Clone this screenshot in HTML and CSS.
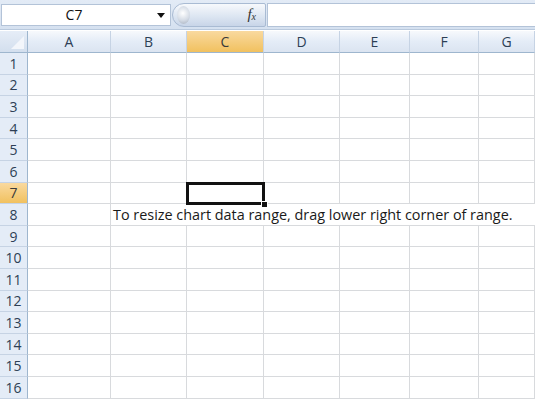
FILE: index.html
```html
<!DOCTYPE html>
<html lang="en">
<head>
    <meta charset="UTF-8">
    <title>Sheet1</title>
    <link rel="stylesheet" href="styles.css">
</head>
<body>

<div class="formula-bar">
    <div class="name-box">
        <span class="cell-ref">C7</span>
        <span class="drop"></span>
    </div>
    <div class="fx-pill">
        <span class="knob"></span>
        <span class="fx">f<sub>x</sub></span>
    </div>
    <div class="formula-input"></div>
</div>

<div class="sheet">
    <div class="corner"><span class="tri"></span></div>
    <div class="ch">A</div><div class="ch">B</div><div class="ch sel">C</div><div class="ch">D</div><div class="ch">E</div><div class="ch">F</div><div class="ch">G</div>

    <div class="rh">1</div><div class="c"></div><div class="c"></div><div class="c"></div><div class="c"></div><div class="c"></div><div class="c"></div><div class="c"></div>
    <div class="rh">2</div><div class="c"></div><div class="c"></div><div class="c"></div><div class="c"></div><div class="c"></div><div class="c"></div><div class="c"></div>
    <div class="rh">3</div><div class="c"></div><div class="c"></div><div class="c"></div><div class="c"></div><div class="c"></div><div class="c"></div><div class="c"></div>
    <div class="rh">4</div><div class="c"></div><div class="c"></div><div class="c"></div><div class="c"></div><div class="c"></div><div class="c"></div><div class="c"></div>
    <div class="rh">5</div><div class="c"></div><div class="c"></div><div class="c"></div><div class="c"></div><div class="c"></div><div class="c"></div><div class="c"></div>
    <div class="rh">6</div><div class="c"></div><div class="c"></div><div class="c"></div><div class="c"></div><div class="c"></div><div class="c"></div><div class="c"></div>
    <div class="rh sel">7</div><div class="c"></div><div class="c"></div><div class="c active"><span class="handle"></span></div><div class="c"></div><div class="c"></div><div class="c"></div><div class="c"></div>
    <div class="rh">8</div><div class="c"></div><div class="c note">To resize chart data range, drag lower right corner of range.</div>
    <div class="rh">9</div><div class="c"></div><div class="c"></div><div class="c"></div><div class="c"></div><div class="c"></div><div class="c"></div><div class="c"></div>
    <div class="rh">10</div><div class="c"></div><div class="c"></div><div class="c"></div><div class="c"></div><div class="c"></div><div class="c"></div><div class="c"></div>
    <div class="rh">11</div><div class="c"></div><div class="c"></div><div class="c"></div><div class="c"></div><div class="c"></div><div class="c"></div><div class="c"></div>
    <div class="rh">12</div><div class="c"></div><div class="c"></div><div class="c"></div><div class="c"></div><div class="c"></div><div class="c"></div><div class="c"></div>
    <div class="rh">13</div><div class="c"></div><div class="c"></div><div class="c"></div><div class="c"></div><div class="c"></div><div class="c"></div><div class="c"></div>
    <div class="rh">14</div><div class="c"></div><div class="c"></div><div class="c"></div><div class="c"></div><div class="c"></div><div class="c"></div><div class="c"></div>
    <div class="rh">15</div><div class="c"></div><div class="c"></div><div class="c"></div><div class="c"></div><div class="c"></div><div class="c"></div><div class="c"></div>
    <div class="rh">16</div><div class="c"></div><div class="c"></div><div class="c"></div><div class="c"></div><div class="c"></div><div class="c"></div><div class="c"></div>
</div>

</body>
</html>
```

FILE: styles.css
```css
body {
    margin: 0;
    padding: 0;
    width: 535px;
    height: 400px;
    overflow: hidden;
    background: white;
    font-family: "Open Sans", "Liberation Sans", sans-serif;
}

/* formula bar */
.formula-bar {
    display: flex;
    align-items: center;
    height: 30px;
    padding: 0 0 0 1px;
    background: linear-gradient(#e3ebf6, #d5e1f0);
    border-bottom: 1px solid #b9c9dd;
    box-sizing: border-box;
}
.name-box {
    position: relative;
    width: 170px;
    height: 22px;
    background: white;
    border: 1px solid #b3c3d8;
    box-sizing: border-box;
    display: flex;
    align-items: center;
    justify-content: center;
}
.name-box .cell-ref {
    font-size: 14px;
    color: #111;
    margin-left: -24px;
}
.name-box .drop {
    position: absolute;
    right: 5px;
    top: 8px;
    width: 0;
    height: 0;
    border-left: 4px solid transparent;
    border-right: 4px solid transparent;
    border-top: 5px solid #111;
}
.fx-pill {
    display: flex;
    align-items: center;
    justify-content: space-between;
    width: 94px;
    height: 24px;
    margin-left: 1px;
    padding: 0 9px 0 4px;
    box-sizing: border-box;
    border: 1px solid #a9bbd3;
    border-radius: 12px 2px 2px 12px;
    background: linear-gradient(#f7f9fc, #dde6f2 55%, #c8d5e8);
}
.fx-pill .knob {
    width: 13px;
    height: 18px;
    border-radius: 50%;
    background: radial-gradient(circle at 45% 40%, #ffffff, #d4dbe5 55%, #a3adbb);
}
.fx-pill .fx {
    font-family: "Liberation Serif", serif;
    font-style: italic;
    font-size: 15px;
    color: #333;
}
.fx-pill .fx sub {
    font-size: 10px;
    vertical-align: -1px;
}
.formula-input {
    flex: 1;
    height: 22px;
    margin-left: 1px;
    background: white;
    border: 1px solid #b3c3d8;
    border-right: none;
}

/* worksheet grid */
.sheet {
    display: grid;
    grid-template-columns: 28px 83px 76px 77px 76px 70px 69px 1fr;
    grid-template-rows: 22px repeat(16, 21.6px);
    margin-top: 1px;
}
.corner {
    position: relative;
    background: linear-gradient(#e6edf7, #d3dfee);
    border-right: 1px solid #9eb6ce;
    border-bottom: 1px solid #9eb6ce;
}
.corner .tri {
    position: absolute;
    right: 3px;
    bottom: 3px;
    width: 0;
    height: 0;
    border-left: 13px solid transparent;
    border-bottom: 13px solid #f3f6fb;
}
.ch {
    display: flex;
    align-items: center;
    justify-content: center;
    font-size: 14px;
    color: #2d3f55;
    background: linear-gradient(#f7f9fc, #e4ecf7 50%, #dbe4f1);
    border-right: 1px solid #c6d3e4;
    border-bottom: 1px solid #9eb6ce;
}
.rh {
    display: flex;
    align-items: center;
    justify-content: center;
    font-size: 14px;
    color: #2d3f55;
    background: #e4ecf7;
    border-right: 1px solid #9eb6ce;
    border-bottom: 1px solid #c6d3e4;
}
.ch.sel, .rh.sel {
    background: linear-gradient(#f9d99f, #f1c15f);
    color: #3a3a3a;
}
.c {
    border-right: 1px solid #d8dadd;
    border-bottom: 1px solid #d8dadd;
}
.c.active {
    position: relative;
    outline: 3px solid #111;
    outline-offset: -2px;
    z-index: 1;
}
.c.active .handle {
    position: absolute;
    right: -5px;
    bottom: -5px;
    width: 5px;
    height: 5px;
    background: #111;
    border: 1px solid white;
}
.c.note {
    grid-column: 3 / -1;
    border-right: none;
    padding: 0 0 0 2px;
    font-size: 14.4px;
    line-height: 21px;
    color: #1a1a1a;
    white-space: nowrap;
}
```
